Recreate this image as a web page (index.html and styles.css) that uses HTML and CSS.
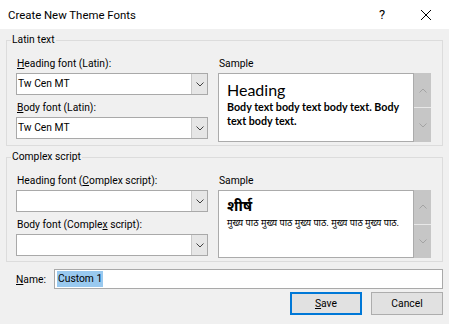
FILE: index.html
```html
<!DOCTYPE html>
<html>

<head>
    <meta charset="UTF-8">
    <title>Create New Theme Fonts</title>
    <link rel="stylesheet" href="styles.css">
</head>

<body>
    <div class="dialog">
        <div class="titlebar">
            <span class="title">Create New Theme Fonts</span>
            <span class="help">?</span>
            <span class="close">
                <svg width="12" height="12" viewBox="0 0 12 12">
                    <path d="M1 1 L11 11 M11 1 L1 11" stroke="#000" stroke-width="1" fill="none" />
                </svg>
            </span>
        </div>

        <div class="content">
            <fieldset class="group">
                <legend>Latin text</legend>
                <div class="group-body">
                    <div class="fields">
                        <div class="lbl"><u>H</u>eading font (Latin):</div>
                        <div class="combo">
                            <span class="value">Tw Cen MT</span>
                            <span class="drop"><svg width="8" height="5" viewBox="0 0 8 5"><path d="M0.5 0.5 L4 4 L7.5 0.5" stroke="#404040" fill="none" /></svg></span>
                        </div>
                        <div class="lbl second"><u>B</u>ody font (Latin):</div>
                        <div class="combo">
                            <span class="value">Tw Cen MT</span>
                            <span class="drop"><svg width="8" height="5" viewBox="0 0 8 5"><path d="M0.5 0.5 L4 4 L7.5 0.5" stroke="#404040" fill="none" /></svg></span>
                        </div>
                    </div>
                    <div class="sample-col">
                        <div class="lbl">Sample</div>
                        <div class="sample-row">
                            <div class="sample latin">
                                <div class="s-head">Heading</div>
                                <div class="s-body">Body text body text body text. Body text body text.</div>
                            </div>
                            <div class="scroll">
                                <div class="sbtn"><svg width="8" height="5" viewBox="0 0 8 5"><path d="M0.5 4.5 L4 1 L7.5 4.5" stroke="#a3a3a3" fill="none" /></svg></div>
                                <div class="sbtn"><svg width="8" height="5" viewBox="0 0 8 5"><path d="M0.5 0.5 L4 4 L7.5 0.5" stroke="#a3a3a3" fill="none" /></svg></div>
                            </div>
                        </div>
                    </div>
                </div>
            </fieldset>

            <fieldset class="group">
                <legend>Complex script</legend>
                <div class="group-body">
                    <div class="fields">
                        <div class="lbl">Heading font (<u>C</u>omplex script):</div>
                        <div class="combo">
                            <span class="value"></span>
                            <span class="drop"><svg width="8" height="5" viewBox="0 0 8 5"><path d="M0.5 0.5 L4 4 L7.5 0.5" stroke="#404040" fill="none" /></svg></span>
                        </div>
                        <div class="lbl second">Body font (Comple<u>x</u> script):</div>
                        <div class="combo">
                            <span class="value"></span>
                            <span class="drop"><svg width="8" height="5" viewBox="0 0 8 5"><path d="M0.5 0.5 L4 4 L7.5 0.5" stroke="#404040" fill="none" /></svg></span>
                        </div>
                    </div>
                    <div class="sample-col">
                        <div class="lbl">Sample</div>
                        <div class="sample-row">
                            <div class="sample complex">
                                <div class="s-head">शीर्ष</div>
                                <div class="s-body">मुख्य पाठ मुख्य पाठ मुख्य पाठ. मुख्य पाठ मुख्य पाठ.</div>
                            </div>
                            <div class="scroll">
                                <div class="sbtn"><svg width="8" height="5" viewBox="0 0 8 5"><path d="M0.5 4.5 L4 1 L7.5 4.5" stroke="#a3a3a3" fill="none" /></svg></div>
                                <div class="sbtn"><svg width="8" height="5" viewBox="0 0 8 5"><path d="M0.5 0.5 L4 4 L7.5 0.5" stroke="#a3a3a3" fill="none" /></svg></div>
                            </div>
                        </div>
                    </div>
                </div>
            </fieldset>

            <div class="name-row">
                <span class="name-lbl"><u>N</u>ame:</span>
                <div class="name-input"><span class="sel">Custom 1</span></div>
            </div>

            <div class="buttons">
                <div class="btn default"><u>S</u>ave</div>
                <div class="btn">Cancel</div>
            </div>
        </div>
    </div>
</body>

</html>
```

FILE: styles.css
```css
* {
    margin: 0;
    padding: 0;
    box-sizing: border-box;
}

body {
    font-family: "Segoe UI", Roboto, "Noto Sans", sans-serif;
    font-size: 10.3px;
    color: #000;
    background: #f0f0f0;
}

.dialog {
    width: 449px;
    height: 324px;
    background: #f0f0f0;
    overflow: hidden;
}

/* title bar */
.titlebar {
    height: 29px;
    background: #fff;
    display: flex;
    align-items: center;
    padding-left: 8px;
}

.titlebar .title {
    flex: 1;
    font-size: 11.4px;
}

.titlebar .help {
    width: 14px;
    text-align: center;
    font-size: 13px;
    margin-right: 31px;
}

.titlebar .close {
    display: flex;
    margin-right: 17px;
}

/* group boxes */
.content {
    padding-top: 3px;
}

.group {
    margin: 0 6px 3px 6px;
    border: 1px solid #dcdcdc;
    padding: 7px 10px 3px 9px;
}

.group legend {
    line-height: 16px;
    padding: 0 1px;
    margin-left: -5px;
}

.group-body {
    display: grid;
    grid-template-columns: 192px 213px;
    column-gap: 10px;
}

.lbl {
    height: 18px;
    line-height: 18px;
    padding-left: 1px;
}

.lbl.second {
    margin-top: 4px;
}

.combo {
    height: 22px;
    background: #fff;
    border: 1px solid #a9a9a9;
    display: flex;
}

.combo .value {
    flex: 1;
    line-height: 20px;
    padding-left: 1px;
}

.combo .drop {
    width: 16px;
    background: #e6e6e6;
    border-left: 1px solid #c8c8c8;
    display: flex;
    align-items: center;
    justify-content: center;
}

/* sample */
.sample-row {
    display: flex;
}

.sample {
    width: 196px;
    height: 69px;
    background: #fff;
    border: 1px solid #ababab;
    padding: 6px 8px 0 8px;
}

.sample.complex {
    height: 68px;
    padding-top: 3px;
}

.sample.latin .s-head {
    font-family: Lato, sans-serif;
    font-size: 16px;
    line-height: 20px;
}

.sample.latin .s-body {
    font-family: Lato, sans-serif;
    font-weight: bold;
    font-size: 10.7px;
    line-height: 13.5px;
}

.sample.complex .s-head {
    font-family: "Noto Sans", sans-serif;
    font-weight: bold;
    font-size: 15px;
    line-height: 22px;
}

.sample.complex .s-body {
    font-family: "Noto Sans", sans-serif;
    font-size: 9.2px;
    line-height: 14px;
    white-space: nowrap;
}

.scroll {
    width: 17px;
    display: flex;
    flex-direction: column;
    gap: 1px;
    background: #e8e8e8;
}

.sbtn {
    flex: 1;
    background: #c6c6c6;
    display: flex;
    align-items: center;
    justify-content: center;
}

/* name + buttons */
.name-row {
    display: flex;
    align-items: center;
    margin: 7px 6px 0 16px;
}

.name-lbl {
    width: 38px;
}

.name-input {
    flex: 1;
    height: 20px;
    background: #fff;
    border: 1px solid #a9a9a9;
    padding: 1px 2px;
}

.name-input .sel {
    display: inline-block;
    background: #99c9ef;
    line-height: 16px;
    padding: 0 1px;
}

.buttons {
    display: flex;
    justify-content: flex-end;
    gap: 9px;
    margin: 3px 6px 0 0;
}

.btn {
    width: 72px;
    height: 23px;
    line-height: 21px;
    text-align: center;
    background: #e1e1e1;
    border: 1px solid #adadad;
}

.btn.default {
    border: 1px solid #0078d7;
    box-shadow: inset 0 0 0 1px #0078d7;
}
```
